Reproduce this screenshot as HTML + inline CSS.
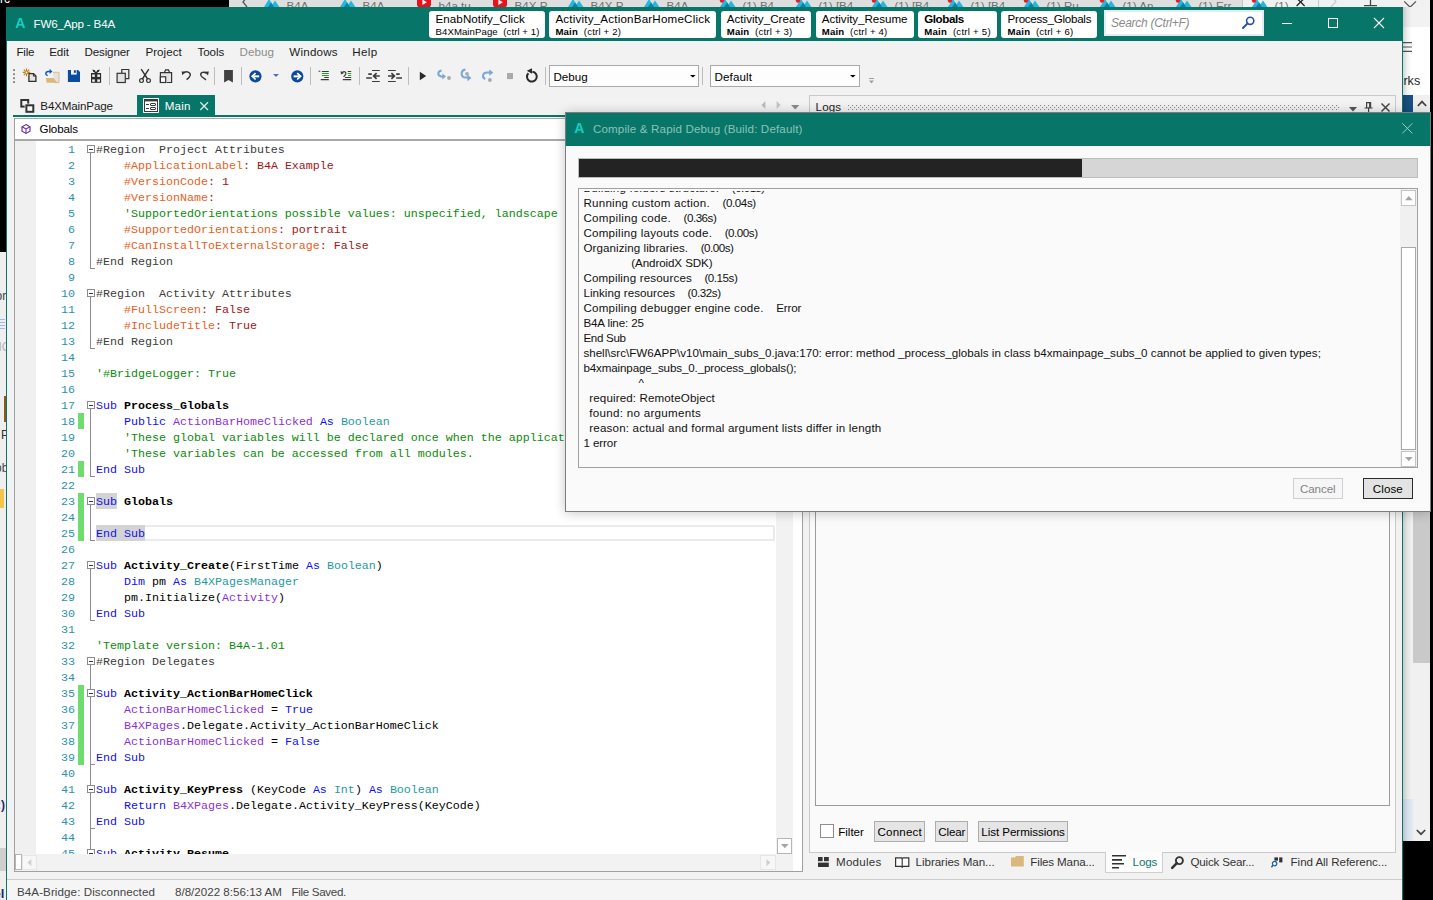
<!DOCTYPE html>
<html lang="en"><head><meta charset="utf-8"><title>FW6_App - B4A</title>
<style>
html,body{margin:0;padding:0;}
body{width:1433px;height:900px;overflow:hidden;position:relative;background:#f2f2f2;font-family:"Liberation Sans", sans-serif;font-size:11.2px;}
div,svg,span.t{position:absolute;box-sizing:border-box;}
span.t{white-space:pre;}
svg{overflow:visible;}
</style></head>
<body>
<div style="left:0px;top:0px;width:229px;height:7px;background:#000;"></div>
<div style="left:229px;top:0px;width:1204px;height:7px;background:#dedede;"></div>
<div style="left:0;top:0;width:1433px;height:7px;overflow:hidden;">
<span class="t" style="left:0.00px;top:-8.96px;font-size:12px;line-height:16px;color:#fff;">rc</span>
<svg style="left:242px;top:0px;" width="6" height="7" viewBox="0 0 6 7"><path d="M5 -3L1 2L5 7" fill="none" stroke="#555" stroke-width="1.3"/></svg>
<div style="left:1243px;top:0px;width:190px;height:7px;background:#f1f1f1;"></div>
<svg style="left:263.5px;top:0px;" width="16" height="7" viewBox="0 0 16 7"><path d="M0 7L5 -1L8.4 4.4L11 0.4L15.4 7Z" fill="#23b7d9"/><path d="M4 7L7.2 2.4L10 7Z" fill="#0d7fb0"/></svg>
<span class="t" style="left:286.50px;top:-2.22px;font-size:11.6px;line-height:16px;color:#707070;">B4A -</span>
<svg style="left:339.5px;top:0px;" width="16" height="7" viewBox="0 0 16 7"><path d="M0 7L5 -1L8.4 4.4L11 0.4L15.4 7Z" fill="#23b7d9"/><path d="M4 7L7.2 2.4L10 7Z" fill="#0d7fb0"/></svg>
<span class="t" style="left:362.50px;top:-2.22px;font-size:11.6px;line-height:16px;color:#707070;">B4A -</span>
<svg style="left:416.5px;top:0px;" width="14" height="7" viewBox="0 0 14 7"><rect x="0" y="-3" width="14" height="10.4" rx="3" fill="#e8121c"/><path d="M5.4 -0.6L9.8 2.2L5.4 5Z" fill="#fff"/></svg>
<span class="t" style="left:438.50px;top:-2.22px;font-size:11.6px;line-height:16px;color:#707070;">b4a tu</span>
<svg style="left:492.5px;top:0px;" width="14" height="7" viewBox="0 0 14 7"><rect x="0" y="-3" width="14" height="10.4" rx="3" fill="#e8121c"/><path d="M5.4 -0.6L9.8 2.2L5.4 5Z" fill="#fff"/></svg>
<span class="t" style="left:514.50px;top:-2.22px;font-size:11.6px;line-height:16px;color:#707070;">B4X P</span>
<svg style="left:567.5px;top:0px;" width="16" height="7" viewBox="0 0 16 7"><path d="M0 7L5 -1L8.4 4.4L11 0.4L15.4 7Z" fill="#23b7d9"/><path d="M4 7L7.2 2.4L10 7Z" fill="#0d7fb0"/></svg>
<span class="t" style="left:590.50px;top:-2.22px;font-size:11.6px;line-height:16px;color:#707070;">B4X P</span>
<svg style="left:643.5px;top:0px;" width="16" height="7" viewBox="0 0 16 7"><path d="M0 7L5 -1L8.4 4.4L11 0.4L15.4 7Z" fill="#23b7d9"/><path d="M4 7L7.2 2.4L10 7Z" fill="#0d7fb0"/></svg>
<span class="t" style="left:666.50px;top:-2.22px;font-size:11.6px;line-height:16px;color:#707070;">B4A -</span>
<svg style="left:719.5px;top:0px;" width="16" height="7" viewBox="0 0 16 7"><path d="M0 7L5 -1L8.4 4.4L11 0.4L15.4 7Z" fill="#23b7d9"/><path d="M4 7L7.2 2.4L10 7Z" fill="#0d7fb0"/><circle cx="2" cy="0.6" r="2.2" fill="#e0202a"/></svg>
<span class="t" style="left:742.50px;top:-2.22px;font-size:11.6px;line-height:16px;color:#707070;">(1) B4</span>
<svg style="left:795.5px;top:0px;" width="16" height="7" viewBox="0 0 16 7"><path d="M0 7L5 -1L8.4 4.4L11 0.4L15.4 7Z" fill="#23b7d9"/><path d="M4 7L7.2 2.4L10 7Z" fill="#0d7fb0"/><circle cx="2" cy="0.6" r="2.2" fill="#e0202a"/></svg>
<span class="t" style="left:818.50px;top:-2.22px;font-size:11.6px;line-height:16px;color:#707070;">(1) [B4</span>
<svg style="left:871.5px;top:0px;" width="16" height="7" viewBox="0 0 16 7"><path d="M0 7L5 -1L8.4 4.4L11 0.4L15.4 7Z" fill="#23b7d9"/><path d="M4 7L7.2 2.4L10 7Z" fill="#0d7fb0"/><circle cx="2" cy="0.6" r="2.2" fill="#e0202a"/></svg>
<span class="t" style="left:894.50px;top:-2.22px;font-size:11.6px;line-height:16px;color:#707070;">(1) [B4</span>
<svg style="left:947.5px;top:0px;" width="16" height="7" viewBox="0 0 16 7"><path d="M0 7L5 -1L8.4 4.4L11 0.4L15.4 7Z" fill="#23b7d9"/><path d="M4 7L7.2 2.4L10 7Z" fill="#0d7fb0"/><circle cx="2" cy="0.6" r="2.2" fill="#e0202a"/></svg>
<span class="t" style="left:970.50px;top:-2.22px;font-size:11.6px;line-height:16px;color:#707070;">(1) [B4</span>
<svg style="left:1023.5px;top:0px;" width="16" height="7" viewBox="0 0 16 7"><path d="M0 7L5 -1L8.4 4.4L11 0.4L15.4 7Z" fill="#23b7d9"/><path d="M4 7L7.2 2.4L10 7Z" fill="#0d7fb0"/><circle cx="2" cy="0.6" r="2.2" fill="#e0202a"/></svg>
<span class="t" style="left:1046.50px;top:-2.22px;font-size:11.6px;line-height:16px;color:#707070;">(1) Ru</span>
<svg style="left:1099.5px;top:0px;" width="16" height="7" viewBox="0 0 16 7"><path d="M0 7L5 -1L8.4 4.4L11 0.4L15.4 7Z" fill="#23b7d9"/><path d="M4 7L7.2 2.4L10 7Z" fill="#0d7fb0"/><circle cx="2" cy="0.6" r="2.2" fill="#e0202a"/></svg>
<span class="t" style="left:1122.50px;top:-2.22px;font-size:11.6px;line-height:16px;color:#707070;">(1) An</span>
<svg style="left:1175.5px;top:0px;" width="16" height="7" viewBox="0 0 16 7"><path d="M0 7L5 -1L8.4 4.4L11 0.4L15.4 7Z" fill="#23b7d9"/><path d="M4 7L7.2 2.4L10 7Z" fill="#0d7fb0"/><circle cx="2" cy="0.6" r="2.2" fill="#e0202a"/></svg>
<span class="t" style="left:1198.50px;top:-2.22px;font-size:11.6px;line-height:16px;color:#707070;">(1) Err</span>
<svg style="left:1251.5px;top:0px;" width="16" height="7" viewBox="0 0 16 7"><path d="M0 7L5 -1L8.4 4.4L11 0.4L15.4 7Z" fill="#23b7d9"/><path d="M4 7L7.2 2.4L10 7Z" fill="#0d7fb0"/><circle cx="2" cy="0.6" r="2.2" fill="#e0202a"/></svg>
<span class="t" style="left:1274.50px;top:-2.22px;font-size:11.6px;line-height:16px;color:#707070;">(1)</span>
<div style="left:1242px;top:0px;width:1px;height:7px;background:#c4c4c4;"></div>
<svg style="left:1296px;top:0px;" width="10" height="7" viewBox="0 0 10 7"><path d="M0.6 -2L8.6 6M8.6 -2L0.6 6" stroke="#222" stroke-width="1.3"/></svg>
<div style="left:1318px;top:0px;width:1px;height:7px;background:#c8c8c8;"></div>
<svg style="left:1330px;top:0px;" width="8" height="7" viewBox="0 0 8 7"><path d="M1 -4L6 1.6L1 7" fill="none" stroke="#c9c9c9" stroke-width="1.2"/></svg>
<svg style="left:1364px;top:0px;" width="13" height="7" viewBox="0 0 13 7"><path d="M6.5 -3V6M0 5.6H13" stroke="#444" stroke-width="1.3"/></svg>
<svg style="left:1404px;top:0px;" width="13" height="8" viewBox="0 0 13 8"><path d="M0.2 1.4L6.1 7.2L12 1.4" fill="none" stroke="#555" stroke-width="1.3"/></svg>
</div>
<div style="left:0px;top:7px;width:6px;height:245px;background:#000;"></div>
<div style="left:0px;top:252px;width:6px;height:648px;background:#efefef;"></div>
<div style="left:0px;top:848px;width:6px;height:23px;background:#cfcfcf;"></div>
<div style="left:0;top:252px;width:6px;height:648px;overflow:hidden;">
<span class="t" style="left:-4.50px;top:35.84px;font-size:12px;line-height:16px;color:#444;">or</span>
<div style="left:0px;top:67px;width:5px;height:1px;background:#9dbbe6;"></div>
<div style="left:0px;top:70px;width:5px;height:1px;background:#9dbbe6;"></div>
<div style="left:0px;top:73px;width:5px;height:1px;background:#9dbbe6;"></div>
<div style="left:0px;top:76px;width:5px;height:1px;background:#9dbbe6;"></div>
<span class="t" style="left:-1.50px;top:86.84px;font-size:12px;line-height:16px;color:#b5b5b5;">IC</span>
<div style="left:3.6px;top:144px;width:2px;height:26px;background:#8a5a1c;"></div>
<span class="t" style="left:1.00px;top:174.84px;font-size:12px;line-height:16px;color:#333;">P</span>
<span class="t" style="left:-5.00px;top:207.84px;font-size:12px;line-height:16px;color:#444;">ob</span>
<div style="left:0px;top:237px;width:4px;height:19px;background:#f3c64a;"></div>
<span class="t" style="left:-3.00px;top:544.84px;font-size:12px;line-height:16px;color:#1b2a6b;font-weight:bold;">:)</span>
<span class="t" style="left:-6.50px;top:634.49px;font-size:13px;line-height:16px;color:#1b2a6b;font-weight:bold;">el</span>
</div>
<div style="left:1403px;top:7px;width:30px;height:20px;background:#f2f2f2;"></div>
<div style="left:1403px;top:27px;width:30px;height:68px;background:#fff;"></div>
<div style="left:1403px;top:95px;width:10px;height:17px;background:#1a4f86;"></div>
<div style="left:1413px;top:95px;width:17px;height:17px;background:#f0f0f0;"></div>
<svg style="left:1417px;top:100px;" width="10" height="7" viewBox="0 0 10 7"><path d="M0.8 6L5 1.6L9.2 6" fill="none" stroke="#444" stroke-width="1.8"/></svg>
<svg style="left:1403px;top:41px;" width="10" height="12" viewBox="0 0 10 12"><path d="M0 1.6H9M0 6H9M0 10.4H9" stroke="#555" stroke-width="1.1"/></svg>
<span class="t" style="left:1403.40px;top:73.23px;font-size:12.6px;line-height:16px;color:#1f1f1f;">rks</span>
<div style="left:1403px;top:511px;width:10px;height:330px;background:#f1f1f1;"></div>
<div style="left:1413px;top:511px;width:17px;height:152px;background:#c9c9c9;"></div>
<div style="left:1413px;top:663px;width:17px;height:178px;background:#f0f0f0;"></div>
<div style="left:1403px;top:799px;width:10px;height:42px;background:#e1e9f5;"></div>
<div style="left:1403px;top:841px;width:30px;height:59px;background:#000;"></div>
<svg style="left:1416.4px;top:829.4px;" width="10" height="7" viewBox="0 0 10 7"><path d="M0.8 1L5 5.2L9.2 1" fill="none" stroke="#444" stroke-width="1.7"/></svg>
<div style="left:1430px;top:0px;width:3px;height:900px;background:#000;"></div>
<div style="left:1403px;top:7px;width:9px;height:834px;background:linear-gradient(90deg,rgba(0,0,0,0.17),rgba(0,0,0,0.05) 50%,rgba(0,0,0,0));"></div>
<div style="left:6px;top:7px;width:1397px;height:893px;background:#f2f2f2;border-left:1px solid #077568;border-right:1px solid #077568;"></div>
<div style="left:6px;top:7px;width:1397px;height:34px;background:#077568;"></div>
<span class="t" style="left:15.30px;top:15.05px;font-size:14px;line-height:16px;color:#12d0c0;font-weight:bold;letter-spacing:-0.125px;">A</span>
<span class="t" style="left:33.50px;top:15.98px;font-size:11.6px;line-height:16px;color:#fff;letter-spacing:-0.175px;">FW6_App - B4A</span>
<div style="left:429.3px;top:10.5px;width:115.69999999999999px;height:27px;background:#fff;border-radius:3px;"></div>
<span class="t" style="left:435.50px;top:10.98px;font-size:11.6px;line-height:16px;color:#000;letter-spacing:0.076px;">EnabNotify_Click</span>
<span class="t" style="left:435.50px;top:23.97px;font-size:9.6px;line-height:16px;color:#000;letter-spacing:0.082px;">B4XMainPage  (ctrl + 1)</span>
<div style="left:549.2px;top:10.5px;width:166.79999999999995px;height:27px;background:#fff;border-radius:3px;"></div>
<span class="t" style="left:555.40px;top:10.98px;font-size:11.6px;line-height:16px;color:#000;letter-spacing:0.197px;">Activity_ActionBarHomeClick</span>
<span class="t" style="left:555.40px;top:23.97px;font-size:9.6px;line-height:16px;color:#000;letter-spacing:0.197px;"><b>Main</b>  (ctrl + 2)</span>
<div style="left:720.5px;top:10.5px;width:90.20000000000005px;height:27px;background:#fff;border-radius:3px;"></div>
<span class="t" style="left:726.70px;top:10.98px;font-size:11.6px;line-height:16px;color:#000;letter-spacing:0.035px;">Activity_Create</span>
<span class="t" style="left:726.70px;top:23.97px;font-size:9.6px;line-height:16px;color:#000;letter-spacing:0.197px;"><b>Main</b>  (ctrl + 3)</span>
<div style="left:815.5px;top:10.5px;width:98.0px;height:27px;background:#fff;border-radius:3px;"></div>
<span class="t" style="left:821.70px;top:10.98px;font-size:11.6px;line-height:16px;color:#000;letter-spacing:-0.036px;">Activity_Resume</span>
<span class="t" style="left:821.70px;top:23.97px;font-size:9.6px;line-height:16px;color:#000;letter-spacing:0.197px;"><b>Main</b>  (ctrl + 4)</span>
<div style="left:918px;top:10.5px;width:78.70000000000005px;height:27px;background:#fff;border-radius:3px;"></div>
<span class="t" style="left:924.20px;top:10.98px;font-size:11.6px;line-height:16px;color:#000;font-weight:bold;letter-spacing:-0.404px;">Globals</span>
<span class="t" style="left:924.20px;top:23.97px;font-size:9.6px;line-height:16px;color:#000;letter-spacing:0.254px;"><b>Main</b>  (ctrl + 5)</span>
<div style="left:1001.4px;top:10.5px;width:95.39999999999998px;height:27px;background:#fff;border-radius:3px;"></div>
<span class="t" style="left:1007.60px;top:10.98px;font-size:11.6px;line-height:16px;color:#000;letter-spacing:-0.269px;">Process_Globals</span>
<span class="t" style="left:1007.60px;top:23.97px;font-size:9.6px;line-height:16px;color:#000;letter-spacing:0.197px;"><b>Main</b>  (ctrl + 6)</span>
<div style="left:1103.7px;top:10.3px;width:160.2px;height:25.6px;background:#fff;border:2.6px solid #e3ebf4;"></div>
<span class="t" style="left:1111.00px;top:15.14px;font-size:12px;line-height:16px;color:#8a8a8a;font-style:italic;letter-spacing:-0.271px;">Search (Ctrl+F)</span>
<svg style="left:1242px;top:15.5px;" width="13" height="13" viewBox="0 0 13 13"><circle cx="8.2" cy="4.8" r="3.6" fill="none" stroke="#2c4fa3" stroke-width="1.6"/><path d="M5.6 7.4 L1 12" stroke="#2c4fa3" stroke-width="2" stroke-linecap="round"/></svg>
<svg style="left:1282px;top:18px;" width="10" height="10" viewBox="0 0 10 10"><path d="M0 5.5H10" stroke="#fff" stroke-width="1"/></svg>
<svg style="left:1328px;top:18px;" width="10" height="10" viewBox="0 0 10 10"><rect x="0.5" y="0.5" width="9" height="9" fill="none" stroke="#fff" stroke-width="1"/></svg>
<svg style="left:1374px;top:18px;" width="10" height="10" viewBox="0 0 10 10"><path d="M0 0L10 10M10 0L0 10" stroke="#fff" stroke-width="1.1"/></svg>
<span class="t" style="left:16.40px;top:43.58px;font-size:11.6px;line-height:16px;color:#1a1a1a;letter-spacing:-0.172px;">File</span>
<span class="t" style="left:49.20px;top:43.58px;font-size:11.6px;line-height:16px;color:#1a1a1a;letter-spacing:-0.096px;">Edit</span>
<span class="t" style="left:84.40px;top:43.58px;font-size:11.6px;line-height:16px;color:#1a1a1a;letter-spacing:-0.126px;">Designer</span>
<span class="t" style="left:145.50px;top:43.58px;font-size:11.6px;line-height:16px;color:#1a1a1a;letter-spacing:0.015px;">Project</span>
<span class="t" style="left:197.60px;top:43.58px;font-size:11.6px;line-height:16px;color:#1a1a1a;letter-spacing:-0.116px;">Tools</span>
<span class="t" style="left:239.50px;top:43.58px;font-size:11.6px;line-height:16px;color:#8c8c8c;letter-spacing:0.066px;">Debug</span>
<span class="t" style="left:289.30px;top:43.58px;font-size:11.6px;line-height:16px;color:#1a1a1a;letter-spacing:0.208px;">Windows</span>
<span class="t" style="left:352.30px;top:43.58px;font-size:11.6px;line-height:16px;color:#1a1a1a;letter-spacing:0.360px;">Help</span>
<div style="left:109px;top:67px;width:1px;height:18px;background:#bdbdbd;"></div>
<div style="left:214px;top:67px;width:1px;height:18px;background:#bdbdbd;"></div>
<div style="left:241px;top:67px;width:1px;height:18px;background:#bdbdbd;"></div>
<div style="left:310px;top:67px;width:1px;height:18px;background:#bdbdbd;"></div>
<div style="left:359px;top:67px;width:1px;height:18px;background:#bdbdbd;"></div>
<div style="left:408px;top:67px;width:1px;height:18px;background:#bdbdbd;"></div>
<div style="left:545px;top:67px;width:1px;height:18px;background:#bdbdbd;"></div>
<div style="left:702px;top:67px;width:1px;height:18px;background:#bdbdbd;"></div>
<svg style="left:10px;top:64px;" width="100" height="24" viewBox="0 0 100 24"><rect x="3.1" y="5.2" width="1.9" height="1.8" fill="#808080"/><rect x="3.1" y="9.3" width="1.9" height="1.8" fill="#808080"/><rect x="3.1" y="13.3" width="1.9" height="1.8" fill="#808080"/><rect x="3.1" y="17.2" width="1.9" height="1.8" fill="#808080"/><path d="M18.9 9.6H23.6L25.9 11.9V17.4H18.9Z" fill="#e4e4e4" stroke="#2e2e2e" stroke-width="1.3"/><path d="M23.4 9.6V12.1H25.9" fill="none" stroke="#2e2e2e" stroke-width="1"/><path d="M16.5 4.6V12.2M12.7 8.4H20.3M13.8 5.7L19.2 11.1M19.2 5.7L13.8 11.1" stroke="#c97a12" stroke-width="1.1"/><circle cx="16.5" cy="8.4" r="1" fill="#fff"/><path d="M42.9 8.3H49V18.6H44" fill="#e2e2e2" stroke="#dcb67a" stroke-width="0.9"/><path d="M35.9 14H43.6L47.1 18.8H36.6Z" fill="#dcb67a"/><path d="M37.6 11.6C35 10.6 35.2 8 38 7.6H40.6" fill="none" stroke="#1257b0" stroke-width="1.5"/><path d="M39.6 4.8L42.4 7.4L39.6 9.9Z" fill="#1257b0"/><path d="M57.9 5.9H68L70 7.9V18H57.9Z" fill="#0b4c9e"/><rect x="61" y="5.9" width="5.7" height="4.7" fill="#f1f1f1"/><rect x="63.9" y="6.3" width="2" height="2.5" fill="#0b4c9e"/><rect x="81" y="9" width="10.1" height="9.8" fill="#2e2e2e"/><rect x="82.2" y="10.5" width="2.6" height="2.4" fill="#f4f4f4"/><rect x="82.2" y="15.4" width="2.6" height="2.4" fill="#f4f4f4"/><rect x="87.3" y="10.5" width="2.6" height="2.4" fill="#f4f4f4"/><rect x="87.3" y="15.4" width="2.6" height="2.4" fill="#f4f4f4"/><path d="M86 9L83.2 6.2M86 9L88.9 6.2" stroke="#2e2e2e" stroke-width="1.5" fill="none"/><path d="M82.4 5.4L85.4 6.4L83.4 8.2ZM89.7 5.4L86.7 6.4L88.7 8.2Z" fill="#2e2e2e"/></svg>
<svg style="left:110px;top:64px;" width="140" height="24" viewBox="0 0 140 24"><path d="M11.8 9V5.5H18.8V14.6H15.6" fill="#ededed" stroke="#333" stroke-width="1.2"/><rect x="7.1" y="9.3" width="8.2" height="9.2" fill="#e2e2e2" stroke="#333" stroke-width="1.2"/><path d="M31.2 5.2L37.6 15M38.8 5.2L32.4 15" stroke="#333" stroke-width="1.4" fill="none"/><circle cx="31.5" cy="16.6" r="1.9" fill="none" stroke="#333" stroke-width="1.2"/><circle cx="38.5" cy="16.6" r="1.9" fill="none" stroke="#333" stroke-width="1.2"/><path d="M50.4 18.5V8.7H61.6V18.5H56.6" fill="#e4e4e4" stroke="#333" stroke-width="1.2"/><path d="M54.4 8.6L55.6 5.8H58.4L59.6 8.6" fill="none" stroke="#333" stroke-width="1.2"/><rect x="50.4" y="12.8" width="5.3" height="5.7" fill="#fafafa" stroke="#333" stroke-width="1.2"/><path d="M73.4 9.2C76.4 6.6 80.8 8 80.2 11.4C79.8 13.2 78.4 14.4 76.6 15.6" fill="none" stroke="#333" stroke-width="1.4"/><path d="M71.6 7.4L75.6 7.6L72.4 11.2Z" fill="#333"/><path d="M96.6 9.4C94 7.2 90.2 8.4 90.8 11.2C91.2 12.8 93.4 14.2 96 15.8" fill="none" stroke="#333" stroke-width="1.4"/><path d="M98.8 7.6L94.8 7.8L98 11.4Z" fill="#333"/><path d="M114.1 6H122.9V18.4L118.5 16L114.1 18.4Z" fill="#404040"/></svg>
<svg style="left:248.6px;top:69.7px;" width="13" height="13" viewBox="0 0 13 13"><circle cx="6.45" cy="6.35" r="6.1" fill="#0c4a9e"/><path d="M10.2 6.35H4.4" fill="none" stroke="#fff" stroke-width="2"/><path d="M6.6 3.2L3.2 6.35L6.6 9.5" fill="none" stroke="#fff" stroke-width="1.7"/></svg>
<svg style="left:273px;top:74.2px;" width="6" height="3" viewBox="0 0 6 3"><path d="M0 0H6L3 3Z" fill="#4b72ba"/></svg>
<svg style="left:290.7px;top:69.7px;" width="13" height="13" viewBox="0 0 13 13"><circle cx="6.3" cy="6.35" r="6.1" fill="#0c4a9e"/><path d="M2.6 6.35H8.4" fill="none" stroke="#fff" stroke-width="2"/><path d="M6.2 3.2L9.6 6.35L6.2 9.5" fill="none" stroke="#fff" stroke-width="1.7"/></svg>
<svg style="left:310px;top:64px;" width="100" height="24" viewBox="0 0 100 24"><g fill="none" stroke-width="1.05"><path d="M8.6 7.2H10.4M11.9 7.4H18.8M14.3 13.4H18.8M10.8 15.6H18.8" stroke="#3c3c3c"/><path d="M11.9 9.5H18.8M11.9 11.4H18.8" stroke="#2c9a2c"/><path d="M37.7 7.4H41.2M35 13.4H41.2M32.8 15.6H41.2" stroke="#3c3c3c"/><path d="M37.7 9.5H41.2M38 11.4H41.2" stroke="#2c9a2c"/><path d="M32.2 8.6C34.6 6.6 36.6 8.4 35.6 10.4L33.6 12.8" stroke="#3c3c3c" stroke-width="1.2"/><path d="M30.6 7L31 10.4L34 9Z" fill="#3c3c3c" stroke="none"/><path d="M62 6.5H69.8M62 17.5H69.8M78 6.5H85.8M78 17.5H85.8" stroke="#3c3c3c"/><path d="M58.3 10.1H61.8M56.2 14H61.8M86.2 10.1H89.7M86.2 14H92" stroke="#3c3c3c" stroke-width="1.6"/><path d="M69.8 12H64.4M66.6 9.2L63.6 12L66.6 14.8" stroke="#3c3c3c" stroke-width="1.7"/><path d="M78 12H83.6M81.4 9.2L84.4 12L81.4 14.8" stroke="#3c3c3c" stroke-width="1.7"/></g></svg>
<svg style="left:410px;top:64px;" width="140" height="24" viewBox="0 0 140 24"><path d="M9.8 7.8L16.2 12L9.8 16.2Z" fill="#2a2a2a"/><path d="M31.6 6.6C27.4 7.4 27 11.6 31.4 12.4H33.6" fill="none" stroke="#7ba7d7" stroke-width="2"/><path d="M32.6 9.4L36 12.6L32.2 15.4Z" fill="#7ba7d7"/><circle cx="39" cy="14" r="1.9" fill="#a9a9a9"/><path d="M55.4 5.6C50.6 6.4 50.2 12.4 55 13.6H58.4" fill="none" stroke="#7ba7d7" stroke-width="2"/><path d="M57.4 10.6L61.4 14L57.4 17.2Z" fill="#7ba7d7"/><circle cx="57" cy="9.8" r="1.9" fill="#a9a9a9"/><path d="M75.2 15C71.4 13 72.6 8.4 77.6 8.6H80" fill="none" stroke="#7ba7d7" stroke-width="2"/><path d="M79.2 5.4L83.4 8.6L79.2 11.8Z" fill="#7ba7d7"/><circle cx="79.9" cy="16" r="1.9" fill="#a9a9a9"/><rect x="97" y="9" width="6" height="6.1" fill="#a9a9a9"/><path d="M118.4 9.2A4.9 4.9 0 1 0 122.4 7.8" fill="none" stroke="#2a2a2a" stroke-width="2"/><path d="M116.8 6.8L122 4.2L122 9.8Z" fill="#2a2a2a"/></svg>
<div style="left:549.2px;top:65.4px;width:150px;height:21.2px;background:#fdfdfd;border:1px solid #a9a9a9;"></div>
<span class="t" style="left:553.40px;top:68.58px;font-size:11.6px;line-height:16px;color:#000;letter-spacing:0.046px;">Debug</span>
<svg style="left:689.8px;top:74.6px;" width="6" height="3" viewBox="0 0 6 3"><path d="M0 0H5.6L2.8 2.6Z" fill="#000"/></svg>
<div style="left:710px;top:65.4px;width:150px;height:21.2px;background:#fdfdfd;border:1px solid #a9a9a9;"></div>
<span class="t" style="left:714.60px;top:68.58px;font-size:11.6px;line-height:16px;color:#000;letter-spacing:0.095px;">Default</span>
<svg style="left:850.4px;top:74.6px;" width="6" height="3" viewBox="0 0 6 3"><path d="M0 0H5.6L2.8 2.6Z" fill="#000"/></svg>
<svg style="left:869px;top:77.6px;" width="5" height="6" viewBox="0 0 5 6"><path d="M0 0.5H5" stroke="#a0a0a0" stroke-width="1"/><path d="M0 2.6H5L2.5 5.6Z" fill="#a0a0a0"/></svg>
<svg style="left:19.8px;top:99px;" width="15" height="15" viewBox="0 0 15 15"><rect x="1.3" y="1" width="6.9" height="6.6" fill="#f2f2f2" stroke="#333" stroke-width="2"/><rect x="4.7" y="4.6" width="10.3" height="10" fill="#f2f2f2"/><rect x="6.4" y="6.3" width="6.9" height="6.5" fill="#fafafa" stroke="#333" stroke-width="2"/></svg>
<span class="t" style="left:40.30px;top:97.68px;font-size:11.6px;line-height:16px;color:#1a1a1a;letter-spacing:-0.139px;">B4XMainPage</span>
<div style="left:137px;top:95px;width:78px;height:21px;background:#077568;"></div>
<svg style="left:143px;top:98px;" width="17" height="15" viewBox="0 0 17 15"><rect x="0" y="0" width="16" height="15" rx="0.8" fill="#fff"/><rect x="1.5" y="1.5" width="13" height="12" fill="#fff" stroke="#3a3a3a" stroke-width="1"/><rect x="1" y="1" width="14" height="2.4" fill="#3a3a3a"/><path d="M3 6.5H6M3 10.5H6" stroke="#3a3a3a" stroke-width="1"/><rect x="7.5" y="5.5" width="5" height="2" rx="0.4" fill="#fff" stroke="#3a3a3a" stroke-width="1"/><rect x="7.5" y="9.5" width="5" height="2" rx="0.4" fill="#fff" stroke="#3a3a3a" stroke-width="1"/></svg>
<span class="t" style="left:164.80px;top:97.68px;font-size:11.6px;line-height:16px;color:#fff;letter-spacing:0.165px;">Main</span>
<svg style="left:200px;top:102px;" width="9" height="9" viewBox="0 0 9 9"><path d="M0.3 0.3L8 8M8 0.3L0.3 8" stroke="#d6ece8" stroke-width="1.3"/></svg>
<div style="left:13px;top:114.7px;width:789px;height:2.8px;background:#077568;"></div>
<svg style="left:761px;top:101px;" width="5" height="8" viewBox="0 0 5 8"><path d="M4.4 0L0.4 4L4.4 8Z" fill="#bcbcbc"/></svg>
<svg style="left:776px;top:101px;" width="5" height="8" viewBox="0 0 5 8"><path d="M0.6 0L4.6 4L0.6 8Z" fill="#c4c4c4"/></svg>
<svg style="left:791px;top:104.8px;" width="9" height="5" viewBox="0 0 9 5"><path d="M0 0H8.4L4.2 4.4Z" fill="#8a8a8a"/></svg>
<div style="left:13.6px;top:117.5px;width:789px;height:754.5px;background:#fff;border:1.5px solid #a0a0a0;border-top:none;"></div>
<div style="left:15px;top:117.6px;width:786px;height:23.4px;background:#fff;border-top:1px solid #a8a8a8;border-bottom:2px solid #a8a8a8;"></div>
<svg style="left:20.6px;top:124.3px;" width="10" height="10" viewBox="0 0 10 10"><path d="M5 0.6L9 2.8V7.2L5 9.4L1 7.2V2.8Z" fill="none" stroke="#6a2a9e" stroke-width="1.15"/><path d="M1 2.8L5 5L9 2.8M5 5V9.4" fill="none" stroke="#6a2a9e" stroke-width="1.05"/></svg>
<span class="t" style="left:39.50px;top:121.08px;font-size:11.6px;line-height:16px;color:#000;letter-spacing:-0.116px;">Globals</span>
<div style="left:15px;top:141px;width:21px;height:713px;background:#f0f0f0;"></div>
<div style="left:776px;top:141px;width:17px;height:713px;background:#f2f2f2;"></div>
<div style="left:15px;top:854px;width:778px;height:16.6px;background:#f2f2f2;"></div>
<div style="left:777.3px;top:838.3px;width:14.6px;height:15.4px;background:#fff;border:1px solid #b5b5b5;"></div>
<svg style="left:780.8px;top:844px;" width="8" height="5" viewBox="0 0 8 5"><path d="M0 0H7.6L3.8 4.2Z" fill="#a5a5a5"/></svg>
<div style="left:760.3px;top:855.4px;width:15.3px;height:14.2px;background:#f7f7f7;border:1px solid #e6e6e6;"></div>
<svg style="left:766px;top:859px;" width="5" height="8" viewBox="0 0 5 8"><path d="M0.4 0L4.4 3.6L0.4 7.2Z" fill="#d0d0d0"/></svg>
<div style="left:15px;top:854.4px;width:6.6px;height:15.6px;background:#fff;border:1px solid #b5b5b5;"></div>
<div style="left:22px;top:855.4px;width:15.3px;height:14.2px;background:#f7f7f7;border:1px solid #e6e6e6;"></div>
<svg style="left:27px;top:859px;" width="5" height="8" viewBox="0 0 5 8"><path d="M4.4 0L0.4 3.6L4.4 7.2Z" fill="#d0d0d0"/></svg>
<div style="left:36px;top:141px;width:740px;height:713px;overflow:hidden;">
<div style="left:60px;top:384px;width:679.4px;height:16.4px;border:2px solid #ebebeb;"></div>
<div style="left:60px;top:352px;width:21px;height:16px;background:#d3d3d3;"></div>
<div style="left:60px;top:384px;width:49px;height:16px;background:#d3d3d3;"></div>
<span class="t" style="left:32.00px;top:0.79px;font-size:11.67px;line-height:16px;color:#2b91af;font-family:'Liberation Mono', monospace;">1</span>
<span class="t" style="left:60.00px;top:0.79px;font-size:11.67px;line-height:16px;color:#000;font-family:'Liberation Mono', monospace;"><span style="color:#3c3c3c">#Region  Project Attributes</span></span>
<span class="t" style="left:32.00px;top:16.79px;font-size:11.67px;line-height:16px;color:#2b91af;font-family:'Liberation Mono', monospace;">2</span>
<span class="t" style="left:60.00px;top:16.79px;font-size:11.67px;line-height:16px;color:#000;font-family:'Liberation Mono', monospace;">    <span style="color:#e9601a">#ApplicationLabel</span><span style="color:#a31515">: B4A Example</span></span>
<span class="t" style="left:32.00px;top:32.79px;font-size:11.67px;line-height:16px;color:#2b91af;font-family:'Liberation Mono', monospace;">3</span>
<span class="t" style="left:60.00px;top:32.79px;font-size:11.67px;line-height:16px;color:#000;font-family:'Liberation Mono', monospace;">    <span style="color:#e9601a">#VersionCode</span><span style="color:#a31515">: 1</span></span>
<span class="t" style="left:32.00px;top:48.79px;font-size:11.67px;line-height:16px;color:#2b91af;font-family:'Liberation Mono', monospace;">4</span>
<span class="t" style="left:60.00px;top:48.79px;font-size:11.67px;line-height:16px;color:#000;font-family:'Liberation Mono', monospace;">    <span style="color:#e9601a">#VersionName</span><span style="color:#a31515">: </span></span>
<span class="t" style="left:32.00px;top:64.79px;font-size:11.67px;line-height:16px;color:#2b91af;font-family:'Liberation Mono', monospace;">5</span>
<span class="t" style="left:60.00px;top:64.79px;font-size:11.67px;line-height:16px;color:#000;font-family:'Liberation Mono', monospace;">    <span style="color:#0a8a0a">'SupportedOrientations possible values: unspecified, landscape or portrait.</span></span>
<span class="t" style="left:32.00px;top:80.79px;font-size:11.67px;line-height:16px;color:#2b91af;font-family:'Liberation Mono', monospace;">6</span>
<span class="t" style="left:60.00px;top:80.79px;font-size:11.67px;line-height:16px;color:#000;font-family:'Liberation Mono', monospace;">    <span style="color:#e9601a">#SupportedOrientations</span><span style="color:#a31515">: portrait</span></span>
<span class="t" style="left:32.00px;top:96.79px;font-size:11.67px;line-height:16px;color:#2b91af;font-family:'Liberation Mono', monospace;">7</span>
<span class="t" style="left:60.00px;top:96.79px;font-size:11.67px;line-height:16px;color:#000;font-family:'Liberation Mono', monospace;">    <span style="color:#e9601a">#CanInstallToExternalStorage</span><span style="color:#a31515">: False</span></span>
<span class="t" style="left:32.00px;top:112.79px;font-size:11.67px;line-height:16px;color:#2b91af;font-family:'Liberation Mono', monospace;">8</span>
<span class="t" style="left:60.00px;top:112.79px;font-size:11.67px;line-height:16px;color:#000;font-family:'Liberation Mono', monospace;"><span style="color:#3c3c3c">#End Region</span></span>
<span class="t" style="left:32.00px;top:128.79px;font-size:11.67px;line-height:16px;color:#2b91af;font-family:'Liberation Mono', monospace;">9</span>
<span class="t" style="left:25.00px;top:144.79px;font-size:11.67px;line-height:16px;color:#2b91af;font-family:'Liberation Mono', monospace;">10</span>
<span class="t" style="left:60.00px;top:144.79px;font-size:11.67px;line-height:16px;color:#000;font-family:'Liberation Mono', monospace;"><span style="color:#3c3c3c">#Region  Activity Attributes</span></span>
<span class="t" style="left:25.00px;top:160.79px;font-size:11.67px;line-height:16px;color:#2b91af;font-family:'Liberation Mono', monospace;">11</span>
<span class="t" style="left:60.00px;top:160.79px;font-size:11.67px;line-height:16px;color:#000;font-family:'Liberation Mono', monospace;">    <span style="color:#e9601a">#FullScreen</span><span style="color:#a31515">: False</span></span>
<span class="t" style="left:25.00px;top:176.79px;font-size:11.67px;line-height:16px;color:#2b91af;font-family:'Liberation Mono', monospace;">12</span>
<span class="t" style="left:60.00px;top:176.79px;font-size:11.67px;line-height:16px;color:#000;font-family:'Liberation Mono', monospace;">    <span style="color:#e9601a">#IncludeTitle</span><span style="color:#a31515">: True</span></span>
<span class="t" style="left:25.00px;top:192.79px;font-size:11.67px;line-height:16px;color:#2b91af;font-family:'Liberation Mono', monospace;">13</span>
<span class="t" style="left:60.00px;top:192.79px;font-size:11.67px;line-height:16px;color:#000;font-family:'Liberation Mono', monospace;"><span style="color:#3c3c3c">#End Region</span></span>
<span class="t" style="left:25.00px;top:208.79px;font-size:11.67px;line-height:16px;color:#2b91af;font-family:'Liberation Mono', monospace;">14</span>
<span class="t" style="left:25.00px;top:224.79px;font-size:11.67px;line-height:16px;color:#2b91af;font-family:'Liberation Mono', monospace;">15</span>
<span class="t" style="left:60.00px;top:224.79px;font-size:11.67px;line-height:16px;color:#000;font-family:'Liberation Mono', monospace;"><span style="color:#0a8a0a">'#BridgeLogger: True</span></span>
<span class="t" style="left:25.00px;top:240.79px;font-size:11.67px;line-height:16px;color:#2b91af;font-family:'Liberation Mono', monospace;">16</span>
<span class="t" style="left:25.00px;top:256.79px;font-size:11.67px;line-height:16px;color:#2b91af;font-family:'Liberation Mono', monospace;">17</span>
<span class="t" style="left:60.00px;top:256.79px;font-size:11.67px;line-height:16px;color:#000;font-family:'Liberation Mono', monospace;"><span style="color:#1010f5">Sub</span> <b>Process_Globals</b></span>
<span class="t" style="left:25.00px;top:272.79px;font-size:11.67px;line-height:16px;color:#2b91af;font-family:'Liberation Mono', monospace;">18</span>
<span class="t" style="left:60.00px;top:272.79px;font-size:11.67px;line-height:16px;color:#000;font-family:'Liberation Mono', monospace;">    <span style="color:#1010f5">Public</span> <span style="color:#8b2fd6">ActionBarHomeClicked</span> <span style="color:#1010f5">As</span> <span style="color:#1f9a9c">Boolean</span></span>
<span class="t" style="left:25.00px;top:288.79px;font-size:11.67px;line-height:16px;color:#2b91af;font-family:'Liberation Mono', monospace;">19</span>
<span class="t" style="left:60.00px;top:288.79px;font-size:11.67px;line-height:16px;color:#000;font-family:'Liberation Mono', monospace;">    <span style="color:#0a8a0a">'These global variables will be declared once when the application starts.</span></span>
<span class="t" style="left:25.00px;top:304.79px;font-size:11.67px;line-height:16px;color:#2b91af;font-family:'Liberation Mono', monospace;">20</span>
<span class="t" style="left:60.00px;top:304.79px;font-size:11.67px;line-height:16px;color:#000;font-family:'Liberation Mono', monospace;">    <span style="color:#0a8a0a">'These variables can be accessed from all modules.</span></span>
<span class="t" style="left:25.00px;top:320.79px;font-size:11.67px;line-height:16px;color:#2b91af;font-family:'Liberation Mono', monospace;">21</span>
<span class="t" style="left:60.00px;top:320.79px;font-size:11.67px;line-height:16px;color:#000;font-family:'Liberation Mono', monospace;"><span style="color:#1010f5">End Sub</span></span>
<span class="t" style="left:25.00px;top:336.79px;font-size:11.67px;line-height:16px;color:#2b91af;font-family:'Liberation Mono', monospace;">22</span>
<span class="t" style="left:25.00px;top:352.79px;font-size:11.67px;line-height:16px;color:#2b91af;font-family:'Liberation Mono', monospace;">23</span>
<span class="t" style="left:60.00px;top:352.79px;font-size:11.67px;line-height:16px;color:#000;font-family:'Liberation Mono', monospace;"><span style="color:#1010f5">Sub</span> <b>Globals</b></span>
<span class="t" style="left:25.00px;top:368.79px;font-size:11.67px;line-height:16px;color:#2b91af;font-family:'Liberation Mono', monospace;">24</span>
<span class="t" style="left:25.00px;top:384.79px;font-size:11.67px;line-height:16px;color:#2b91af;font-family:'Liberation Mono', monospace;">25</span>
<span class="t" style="left:60.00px;top:384.79px;font-size:11.67px;line-height:16px;color:#000;font-family:'Liberation Mono', monospace;"><span style="color:#1010f5">End Sub</span></span>
<span class="t" style="left:25.00px;top:400.79px;font-size:11.67px;line-height:16px;color:#2b91af;font-family:'Liberation Mono', monospace;">26</span>
<span class="t" style="left:25.00px;top:416.79px;font-size:11.67px;line-height:16px;color:#2b91af;font-family:'Liberation Mono', monospace;">27</span>
<span class="t" style="left:60.00px;top:416.79px;font-size:11.67px;line-height:16px;color:#000;font-family:'Liberation Mono', monospace;"><span style="color:#1010f5">Sub</span> <b>Activity_Create</b>(FirstTime <span style="color:#1010f5">As</span> <span style="color:#1f9a9c">Boolean</span>)</span>
<span class="t" style="left:25.00px;top:432.79px;font-size:11.67px;line-height:16px;color:#2b91af;font-family:'Liberation Mono', monospace;">28</span>
<span class="t" style="left:60.00px;top:432.79px;font-size:11.67px;line-height:16px;color:#000;font-family:'Liberation Mono', monospace;">    <span style="color:#1010f5">Dim</span> pm <span style="color:#1010f5">As</span> <span style="color:#1f9a9c">B4XPagesManager</span></span>
<span class="t" style="left:25.00px;top:448.79px;font-size:11.67px;line-height:16px;color:#2b91af;font-family:'Liberation Mono', monospace;">29</span>
<span class="t" style="left:60.00px;top:448.79px;font-size:11.67px;line-height:16px;color:#000;font-family:'Liberation Mono', monospace;">    pm.Initialize(<span style="color:#8b2fd6">Activity</span>)</span>
<span class="t" style="left:25.00px;top:464.79px;font-size:11.67px;line-height:16px;color:#2b91af;font-family:'Liberation Mono', monospace;">30</span>
<span class="t" style="left:60.00px;top:464.79px;font-size:11.67px;line-height:16px;color:#000;font-family:'Liberation Mono', monospace;"><span style="color:#1010f5">End Sub</span></span>
<span class="t" style="left:25.00px;top:480.79px;font-size:11.67px;line-height:16px;color:#2b91af;font-family:'Liberation Mono', monospace;">31</span>
<span class="t" style="left:25.00px;top:496.79px;font-size:11.67px;line-height:16px;color:#2b91af;font-family:'Liberation Mono', monospace;">32</span>
<span class="t" style="left:60.00px;top:496.79px;font-size:11.67px;line-height:16px;color:#000;font-family:'Liberation Mono', monospace;"><span style="color:#0a8a0a">'Template version: B4A-1.01</span></span>
<span class="t" style="left:25.00px;top:512.79px;font-size:11.67px;line-height:16px;color:#2b91af;font-family:'Liberation Mono', monospace;">33</span>
<span class="t" style="left:60.00px;top:512.79px;font-size:11.67px;line-height:16px;color:#000;font-family:'Liberation Mono', monospace;"><span style="color:#3c3c3c">#Region Delegates</span></span>
<span class="t" style="left:25.00px;top:528.79px;font-size:11.67px;line-height:16px;color:#2b91af;font-family:'Liberation Mono', monospace;">34</span>
<span class="t" style="left:25.00px;top:544.79px;font-size:11.67px;line-height:16px;color:#2b91af;font-family:'Liberation Mono', monospace;">35</span>
<span class="t" style="left:60.00px;top:544.79px;font-size:11.67px;line-height:16px;color:#000;font-family:'Liberation Mono', monospace;"><span style="color:#1010f5">Sub</span> <b>Activity_ActionBarHomeClick</b></span>
<span class="t" style="left:25.00px;top:560.79px;font-size:11.67px;line-height:16px;color:#2b91af;font-family:'Liberation Mono', monospace;">36</span>
<span class="t" style="left:60.00px;top:560.79px;font-size:11.67px;line-height:16px;color:#000;font-family:'Liberation Mono', monospace;">    <span style="color:#8b2fd6">ActionBarHomeClicked</span> = <span style="color:#1010f5">True</span></span>
<span class="t" style="left:25.00px;top:576.79px;font-size:11.67px;line-height:16px;color:#2b91af;font-family:'Liberation Mono', monospace;">37</span>
<span class="t" style="left:60.00px;top:576.79px;font-size:11.67px;line-height:16px;color:#000;font-family:'Liberation Mono', monospace;">    <span style="color:#8b2fd6">B4XPages</span>.Delegate.Activity_ActionBarHomeClick</span>
<span class="t" style="left:25.00px;top:592.79px;font-size:11.67px;line-height:16px;color:#2b91af;font-family:'Liberation Mono', monospace;">38</span>
<span class="t" style="left:60.00px;top:592.79px;font-size:11.67px;line-height:16px;color:#000;font-family:'Liberation Mono', monospace;">    <span style="color:#8b2fd6">ActionBarHomeClicked</span> = <span style="color:#1010f5">False</span></span>
<span class="t" style="left:25.00px;top:608.79px;font-size:11.67px;line-height:16px;color:#2b91af;font-family:'Liberation Mono', monospace;">39</span>
<span class="t" style="left:60.00px;top:608.79px;font-size:11.67px;line-height:16px;color:#000;font-family:'Liberation Mono', monospace;"><span style="color:#1010f5">End Sub</span></span>
<span class="t" style="left:25.00px;top:624.79px;font-size:11.67px;line-height:16px;color:#2b91af;font-family:'Liberation Mono', monospace;">40</span>
<span class="t" style="left:25.00px;top:640.79px;font-size:11.67px;line-height:16px;color:#2b91af;font-family:'Liberation Mono', monospace;">41</span>
<span class="t" style="left:60.00px;top:640.79px;font-size:11.67px;line-height:16px;color:#000;font-family:'Liberation Mono', monospace;"><span style="color:#1010f5">Sub</span> <b>Activity_KeyPress</b> (KeyCode <span style="color:#1010f5">As</span> <span style="color:#1f9a9c">Int</span>) <span style="color:#1010f5">As</span> <span style="color:#1f9a9c">Boolean</span></span>
<span class="t" style="left:25.00px;top:656.79px;font-size:11.67px;line-height:16px;color:#2b91af;font-family:'Liberation Mono', monospace;">42</span>
<span class="t" style="left:60.00px;top:656.79px;font-size:11.67px;line-height:16px;color:#000;font-family:'Liberation Mono', monospace;">    <span style="color:#1010f5">Return</span> <span style="color:#8b2fd6">B4XPages</span>.Delegate.Activity_KeyPress(KeyCode)</span>
<span class="t" style="left:25.00px;top:672.79px;font-size:11.67px;line-height:16px;color:#2b91af;font-family:'Liberation Mono', monospace;">43</span>
<span class="t" style="left:60.00px;top:672.79px;font-size:11.67px;line-height:16px;color:#000;font-family:'Liberation Mono', monospace;"><span style="color:#1010f5">End Sub</span></span>
<span class="t" style="left:25.00px;top:688.79px;font-size:11.67px;line-height:16px;color:#2b91af;font-family:'Liberation Mono', monospace;">44</span>
<span class="t" style="left:25.00px;top:704.79px;font-size:11.67px;line-height:16px;color:#2b91af;font-family:'Liberation Mono', monospace;">45</span>
<span class="t" style="left:60.00px;top:704.79px;font-size:11.67px;line-height:16px;color:#000;font-family:'Liberation Mono', monospace;"><span style="color:#1010f5">Sub</span> <b>Activity_Resume</b></span>
<div style="left:42.3px;top:272px;width:5.4px;height:16px;background:#6fdc6f;"></div>
<div style="left:42.3px;top:320px;width:5.4px;height:16px;background:#6fdc6f;"></div>
<div style="left:42.3px;top:352px;width:5.4px;height:48px;background:#6fdc6f;"></div>
<div style="left:42.3px;top:544px;width:5.4px;height:80px;background:#6fdc6f;"></div>
<div style="left:50.6px;top:4px;width:8.2px;height:8.2px;background:#fff;border:1px solid #8c8c8c;"></div>
<div style="left:52.6px;top:7.6px;width:4.2px;height:1px;background:#333;"></div>
<div style="left:54.2px;top:12.2px;width:1px;height:115.2px;background:#8c8c8c;"></div>
<div style="left:54.2px;top:126.6px;width:4.8px;height:1px;background:#8c8c8c;"></div>
<div style="left:50.6px;top:148px;width:8.2px;height:8.2px;background:#fff;border:1px solid #8c8c8c;"></div>
<div style="left:52.6px;top:151.6px;width:4.2px;height:1px;background:#333;"></div>
<div style="left:54.2px;top:156.2px;width:1px;height:51.199999999999996px;background:#8c8c8c;"></div>
<div style="left:54.2px;top:206.6px;width:4.8px;height:1px;background:#8c8c8c;"></div>
<div style="left:50.6px;top:260px;width:8.2px;height:8.2px;background:#fff;border:1px solid #8c8c8c;"></div>
<div style="left:52.6px;top:263.6px;width:4.2px;height:1px;background:#333;"></div>
<div style="left:54.2px;top:268.2px;width:1px;height:67.2px;background:#8c8c8c;"></div>
<div style="left:54.2px;top:334.6px;width:4.8px;height:1px;background:#8c8c8c;"></div>
<div style="left:50.6px;top:356px;width:8.2px;height:8.2px;background:#fff;border:1px solid #8c8c8c;"></div>
<div style="left:52.6px;top:359.6px;width:4.2px;height:1px;background:#333;"></div>
<div style="left:54.2px;top:364.2px;width:1px;height:35.2px;background:#8c8c8c;"></div>
<div style="left:54.2px;top:398.6px;width:4.8px;height:1px;background:#8c8c8c;"></div>
<div style="left:50.6px;top:420px;width:8.2px;height:8.2px;background:#fff;border:1px solid #8c8c8c;"></div>
<div style="left:52.6px;top:423.6px;width:4.2px;height:1px;background:#333;"></div>
<div style="left:54.2px;top:428.2px;width:1px;height:51.199999999999996px;background:#8c8c8c;"></div>
<div style="left:54.2px;top:478.6px;width:4.8px;height:1px;background:#8c8c8c;"></div>
<div style="left:50.6px;top:516px;width:8.2px;height:8.2px;background:#fff;border:1px solid #8c8c8c;"></div>
<div style="left:52.6px;top:519.6px;width:4.2px;height:1px;background:#333;"></div>
<div style="left:54.2px;top:524.2px;width:1px;height:211.8px;background:#8c8c8c;"></div>
<div style="left:50.6px;top:548px;width:8.2px;height:8.2px;background:#fff;border:1px solid #8c8c8c;"></div>
<div style="left:52.6px;top:551.6px;width:4.2px;height:1px;background:#333;"></div>
<div style="left:50.6px;top:644px;width:8.2px;height:8.2px;background:#fff;border:1px solid #8c8c8c;"></div>
<div style="left:52.6px;top:647.6px;width:4.2px;height:1px;background:#333;"></div>
<div style="left:50.6px;top:708px;width:8.2px;height:8.2px;background:#fff;border:1px solid #8c8c8c;"></div>
<div style="left:52.6px;top:711.6px;width:4.2px;height:1px;background:#333;"></div>
<div style="left:54.2px;top:622.6px;width:4.8px;height:1px;background:#8c8c8c;"></div>
<div style="left:54.2px;top:686.6px;width:4.8px;height:1px;background:#8c8c8c;"></div>
</div>
<div style="left:802.6px;top:117px;width:6.4px;height:755px;background:#f2f2f2;"></div>
<div style="left:809px;top:95.3px;width:587px;height:758px;background:#fafafa;border:1px solid #c9c9c9;"></div>
<div style="left:810px;top:96.3px;width:585px;height:21px;background:#f2f2f2;"></div>
<span class="t" style="left:815.60px;top:98.98px;font-size:11.6px;line-height:16px;color:#1a1a1a;letter-spacing:0.090px;">Logs</span>
<svg style="left:848.4px;top:104.9px" width="492" height="5.2"><defs><pattern id="dg" width="4" height="4" patternUnits="userSpaceOnUse"><rect x="0" y="0" width="1.1" height="1.1" fill="#8a8a8a"/><rect x="2" y="2" width="1.1" height="1.1" fill="#8a8a8a"/></pattern></defs><rect width="492" height="5.2" fill="url(#dg)"/></svg>
<svg style="left:1349px;top:106.8px;" width="8" height="5" viewBox="0 0 8 5"><path d="M0 0H8L4 4.4Z" fill="#555"/></svg>
<svg style="left:1364px;top:102.2px;" width="9" height="11" viewBox="0 0 9 11"><path d="M2.6 0.6H6.6V5.8H2.6ZM0.6 6H8.6M4.6 6V10.8" fill="none" stroke="#444" stroke-width="1.2"/><path d="M5.8 0.6V5.8" stroke="#444" stroke-width="1.4"/></svg>
<svg style="left:1380.6px;top:102.8px;" width="9" height="9" viewBox="0 0 9 9"><path d="M0.5 0.5L8.5 8.5M8.5 0.5L0.5 8.5" stroke="#444" stroke-width="1.5"/></svg>
<div style="left:815.4px;top:118px;width:574.6px;height:687.6px;background:#fafafa;border:1px solid #9b9b9b;"></div>
<div style="left:820px;top:824px;width:14px;height:14px;background:#fff;border:1px solid #8e8e8e;"></div>
<span class="t" style="left:838.30px;top:823.98px;font-size:11.6px;line-height:16px;color:#000;letter-spacing:-0.044px;">Filter</span>
<div style="left:874.3px;top:821.4px;width:50.700000000000045px;height:20.399999999999977px;background:#e5e5e5;border:1px solid #adadad;"></div>
<span class="t" style="left:877.60px;top:823.98px;font-size:11.6px;line-height:16px;color:#000;letter-spacing:0.145px;">Connect</span>
<div style="left:935.2px;top:821.4px;width:32.799999999999955px;height:20.399999999999977px;background:#e5e5e5;border:1px solid #adadad;"></div>
<span class="t" style="left:938.30px;top:823.98px;font-size:11.6px;line-height:16px;color:#000;letter-spacing:-0.184px;">Clear</span>
<div style="left:978px;top:821.4px;width:89.79999999999995px;height:20.399999999999977px;background:#e5e5e5;border:1px solid #adadad;"></div>
<span class="t" style="left:981.30px;top:823.98px;font-size:11.6px;line-height:16px;color:#000;letter-spacing:-0.057px;">List Permissions</span>
<svg style="left:818px;top:857px;" width="11" height="10" viewBox="0 0 11 10"><rect x="0" y="0" width="4.6" height="4.2" fill="#333"/><rect x="6" y="0" width="4.8" height="4.2" fill="#333"/><rect x="0" y="5.6" width="10.8" height="4.4" fill="#333"/></svg>
<span class="t" style="left:836.00px;top:854.18px;font-size:11.6px;line-height:16px;color:#333;letter-spacing:0.253px;">Modules</span>
<svg style="left:894.6px;top:856.5px;" width="15" height="11" viewBox="0 0 15 11"><path d="M0.6 0.8H6.4L7.2 1.6L8 0.8H13.8V9.4H8L7.2 10.2L6.4 9.4H0.6Z" fill="#fdfdfd" stroke="#333" stroke-width="1.2"/><path d="M7.2 1.6V10.2" stroke="#333" stroke-width="1.1"/></svg>
<span class="t" style="left:915.60px;top:854.18px;font-size:11.6px;line-height:16px;color:#333;letter-spacing:-0.057px;">Libraries Man...</span>
<svg style="left:1011.2px;top:856.4px;" width="13" height="11" viewBox="0 0 13 11"><path d="M0 1.6H4L5 0H12.8V10.4H0Z" fill="#dcb67a"/></svg>
<span class="t" style="left:1030.30px;top:854.18px;font-size:11.6px;line-height:16px;color:#333;letter-spacing:-0.152px;">Files Mana...</span>
<div style="left:1105.4px;top:852px;width:57.2px;height:20.6px;background:#fcfcfc;border:1px solid #cfcfcf;border-top:none;"></div>
<svg style="left:1112px;top:855px;" width="14" height="14" viewBox="0 0 14 14"><path d="M0 0.8H14M0 4.9H10M0 8.8H12M0 12.8H7" stroke="#333" stroke-width="1.6"/></svg>
<span class="t" style="left:1132.60px;top:854.18px;font-size:11.6px;line-height:16px;color:#0e7a6e;letter-spacing:-0.135px;">Logs</span>
<svg style="left:1171px;top:855.5px;" width="13" height="13" viewBox="0 0 13 13"><circle cx="8.4" cy="4.6" r="3.5" fill="none" stroke="#333" stroke-width="1.9"/><path d="M5.8 7.2L1.2 11.8" stroke="#333" stroke-width="2.6" stroke-linecap="round"/></svg>
<span class="t" style="left:1190.50px;top:854.18px;font-size:11.6px;line-height:16px;color:#333;letter-spacing:-0.190px;">Quick Sear...</span>
<svg style="left:1270.6px;top:856.5px;" width="12" height="11" viewBox="0 0 12 11"><rect x="3.4" y="0.4" width="3.6" height="3.2" fill="#333"/><rect x="8.2" y="0.4" width="3.2" height="5" fill="#333"/><circle cx="3.6" cy="6.6" r="2.2" fill="none" stroke="#1c5fb0" stroke-width="1.2"/><path d="M2 8.2L0.4 10.2" stroke="#1c5fb0" stroke-width="1.4"/></svg>
<span class="t" style="left:1290.60px;top:854.18px;font-size:11.6px;line-height:16px;color:#333;letter-spacing:-0.063px;">Find All Referenc...</span>
<div style="left:7px;top:879px;width:1395px;height:1px;background:#cdcdcd;"></div>
<div style="left:7px;top:880px;width:1395px;height:20px;background:#f5f5f5;"></div>
<span class="t" style="left:17.00px;top:883.98px;font-size:11.6px;line-height:16px;color:#444;letter-spacing:0.084px;">B4A-Bridge: Disconnected</span>
<span class="t" style="left:175.00px;top:883.98px;font-size:11.6px;line-height:16px;color:#444;">8/8/2022 8:56:13 AM</span>
<span class="t" style="left:291.50px;top:883.98px;font-size:11.6px;line-height:16px;color:#444;letter-spacing:-0.318px;">File Saved.</span>
<div style="left:565px;top:112px;width:866px;height:400px;background:#fafafa;border:1px solid #7c7c7c;box-shadow:0 1px 11px rgba(0,0,0,0.22);"></div>
<div style="left:566px;top:113px;width:864px;height:32.6px;background:#077568;"></div>
<span class="t" style="left:574.30px;top:120.15px;font-size:14px;line-height:16px;color:#12d0c0;font-weight:bold;letter-spacing:-0.125px;">A</span>
<span class="t" style="left:592.90px;top:121.18px;font-size:11.6px;line-height:16px;color:#8ac3b9;letter-spacing:0.143px;">Compile &amp; Rapid Debug (Build: Default)</span>
<svg style="left:1401.6px;top:122.8px;" width="11" height="11" viewBox="0 0 11 11"><path d="M0.3 0.3L10.4 10.4M10.4 0.3L0.3 10.4" stroke="#8fcfc5" stroke-width="1"/></svg>
<div style="left:578.2px;top:158.2px;width:839.6px;height:19.4px;background:#d6d6d6;border:1px solid #bcbcbc;"></div>
<div style="left:579.2px;top:159.2px;width:502.6px;height:17.4px;background:#232323;"></div>
<div style="left:578.2px;top:188.4px;width:839.6px;height:279.4px;background:#fafafa;border:1px solid #a0a0a0;overflow:hidden;">
<span class="t" style="left:4.20px;top:-9.22px;font-size:11.6px;line-height:15px;color:#111;letter-spacing:0.188px;">Building folders structure.</span>
<span class="t" style="left:152.60px;top:-9.22px;font-size:11.6px;line-height:15px;color:#111;letter-spacing:-0.485px;">(0.01s)</span>
<span class="t" style="left:4.20px;top:5.58px;font-size:11.6px;line-height:15px;color:#111;letter-spacing:0.247px;">Running custom action.</span>
<span class="t" style="left:143.30px;top:5.58px;font-size:11.6px;line-height:15px;color:#111;letter-spacing:-0.399px;">(0.04s)</span>
<span class="t" style="left:4.20px;top:20.58px;font-size:11.6px;line-height:15px;color:#111;letter-spacing:0.304px;">Compiling code.</span>
<span class="t" style="left:104.40px;top:20.58px;font-size:11.6px;line-height:15px;color:#111;letter-spacing:-0.485px;">(0.36s)</span>
<span class="t" style="left:4.20px;top:35.58px;font-size:11.6px;line-height:15px;color:#111;letter-spacing:0.248px;">Compiling layouts code.</span>
<span class="t" style="left:145.50px;top:35.58px;font-size:11.6px;line-height:15px;color:#111;letter-spacing:-0.456px;">(0.00s)</span>
<span class="t" style="left:4.20px;top:50.58px;font-size:11.6px;line-height:15px;color:#111;letter-spacing:0.081px;">Organizing libraries.</span>
<span class="t" style="left:121.50px;top:50.58px;font-size:11.6px;line-height:15px;color:#111;letter-spacing:-0.485px;">(0.00s)</span>
<span class="t" style="left:52.10px;top:65.58px;font-size:11.6px;line-height:15px;color:#111;letter-spacing:-0.092px;">(AndroidX SDK)</span>
<span class="t" style="left:4.20px;top:80.58px;font-size:11.6px;line-height:15px;color:#111;letter-spacing:0.153px;">Compiling resources</span>
<span class="t" style="left:125.20px;top:80.58px;font-size:11.6px;line-height:15px;color:#111;letter-spacing:-0.442px;">(0.15s)</span>
<span class="t" style="left:4.20px;top:95.58px;font-size:11.6px;line-height:15px;color:#111;letter-spacing:0.054px;">Linking resources</span>
<span class="t" style="left:108.40px;top:95.58px;font-size:11.6px;line-height:15px;color:#111;letter-spacing:-0.442px;">(0.32s)</span>
<span class="t" style="left:4.20px;top:110.58px;font-size:11.6px;line-height:15px;color:#111;letter-spacing:0.220px;">Compiling debugger engine code.</span>
<span class="t" style="left:197.10px;top:110.58px;font-size:11.6px;line-height:15px;color:#111;letter-spacing:-0.173px;">Error</span>
<span class="t" style="left:4.20px;top:125.58px;font-size:11.6px;line-height:15px;color:#111;letter-spacing:-0.108px;">B4A line: 25</span>
<span class="t" style="left:4.20px;top:140.58px;font-size:11.6px;line-height:15px;color:#111;letter-spacing:-0.312px;">End Sub</span>
<span class="t" style="left:4.20px;top:155.58px;font-size:11.6px;line-height:15px;color:#111;letter-spacing:0.016px;">shell\src\FW6APP\v10\main_subs_0.java:170: error: method _process_globals in class b4xmainpage_subs_0 cannot be applied to given types;</span>
<span class="t" style="left:4.20px;top:170.58px;font-size:11.6px;line-height:15px;color:#111;letter-spacing:-0.125px;">b4xmainpage_subs_0._process_globals();</span>
<span class="t" style="left:59.30px;top:185.58px;font-size:11.6px;line-height:15px;color:#111;letter-spacing:-0.253px;">^</span>
<span class="t" style="left:10.10px;top:200.58px;font-size:11.6px;line-height:15px;color:#111;letter-spacing:0.118px;">required: RemoteObject</span>
<span class="t" style="left:10.10px;top:215.58px;font-size:11.6px;line-height:15px;color:#111;letter-spacing:0.281px;">found: no arguments</span>
<span class="t" style="left:10.10px;top:230.58px;font-size:11.6px;line-height:15px;color:#111;letter-spacing:0.178px;">reason: actual and formal argument lists differ in length</span>
<span class="t" style="left:4.20px;top:245.58px;font-size:11.6px;line-height:15px;color:#111;letter-spacing:-0.079px;">1 error</span>
<div style="left:0px;top:0px;width:821px;height:1.3px;background:#fafafa;"></div>
<div style="left:821.3px;top:0px;width:16.6px;height:277.4px;background:#f0f0f0;"></div>
<div style="left:821.8px;top:0.4px;width:14.6px;height:16px;background:#fff;border:1px solid #c4c4c4;"></div>
<svg style="left:825.4px;top:6.4px;" width="8" height="5" viewBox="0 0 8 5"><path d="M0 4.2H7.6L3.8 0Z" fill="#a5a5a5"/></svg>
<div style="left:821.8px;top:58px;width:14.6px;height:202.6px;background:#fff;border:1px solid #a8a8a8;"></div>
<div style="left:821.8px;top:262px;width:14.6px;height:15.2px;background:#fff;border:1px solid #c4c4c4;"></div>
<svg style="left:825.4px;top:267.6px;" width="8" height="5" viewBox="0 0 8 5"><path d="M0 0H7.6L3.8 4.2Z" fill="#a5a5a5"/></svg>
</div>
<div style="left:1293px;top:478px;width:49.59999999999991px;height:20.80000000000001px;background:#f6f6f6;border:1px solid #d0d0d0;"></div>
<span class="t" style="left:1300.00px;top:480.58px;font-size:11.6px;line-height:16px;color:#838383;letter-spacing:-0.099px;">Cancel</span>
<div style="left:1362.8px;top:478px;width:50.0px;height:20.80000000000001px;background:#e3e3e3;border:1px solid #2b2b2b;"></div>
<span class="t" style="left:1372.80px;top:480.58px;font-size:11.6px;line-height:16px;color:#000;letter-spacing:0.069px;">Close</span>
</body></html>
